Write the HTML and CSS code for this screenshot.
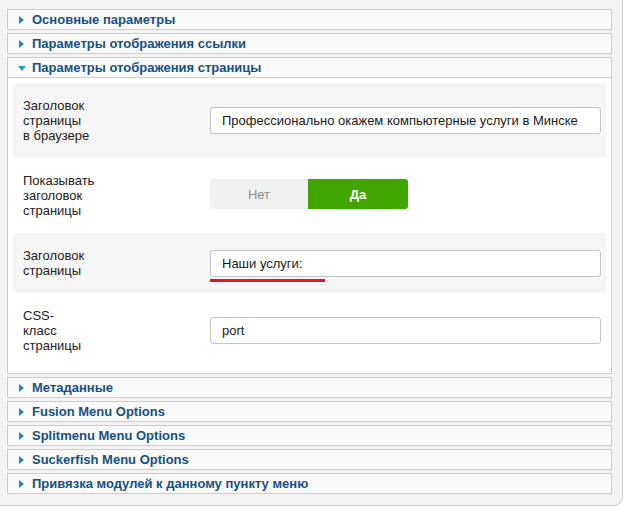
FILE: index.html
```html
<!DOCTYPE html>
<html lang="ru">
<head>
<meta charset="utf-8">
<title>Параметры пункта меню</title>
<link rel="stylesheet" href="styles.css">
</head>
<body>
<div class="pane">
  <div class="panel"><h3 class="toggler"><span class="arrow"></span>Основные параметры</h3></div>
  <div class="panel"><h3 class="toggler"><span class="arrow"></span>Параметры отображения ссылки</h3></div>
  <div class="panel open">
    <h3 class="toggler"><span class="arrow down"></span>Параметры отображения страницы</h3>
    <div class="content">
      <div class="row shaded">
        <div class="key">Заголовок<br>страницы<br>в браузере</div>
        <div class="val"><input class="field" type="text" value="Профессионально окажем компьютерные услуги в Минске"></div>
      </div>
      <div class="row">
        <div class="key">Показывать<br>заголовок<br>страницы</div>
        <div class="val">
          <div class="switch"><span class="opt no">Нет</span><span class="opt yes">Да</span></div>
        </div>
      </div>
      <div class="row shaded">
        <div class="key">Заголовок<br>страницы</div>
        <div class="val mark"><input class="field" type="text" value="Наши услуги:"><span class="underline"></span></div>
      </div>
      <div class="row">
        <div class="key">CSS-<br>класс<br>страницы</div>
        <div class="val"><input class="field" type="text" value="port"></div>
      </div>
    </div>
  </div>
  <div class="panel"><h3 class="toggler"><span class="arrow"></span>Метаданные</h3></div>
  <div class="panel"><h3 class="toggler"><span class="arrow"></span>Fusion Menu Options</h3></div>
  <div class="panel"><h3 class="toggler"><span class="arrow"></span>Splitmenu Menu Options</h3></div>
  <div class="panel"><h3 class="toggler"><span class="arrow"></span>Suckerfish Menu Options</h3></div>
  <div class="panel last"><h3 class="toggler"><span class="arrow"></span>Привязка модулей к данному пункту меню</h3></div>
</div>
</body>
</html>
```
FILE: styles.css
```css
html, body {
  margin: 0;
  padding: 0;
  background: #ffffff;
  font-family: "Liberation Sans", Arial, sans-serif;
  font-size: 13px;
  color: #222;
}

.pane {
  width: 605px;
  padding: 9px 10px 11px 7px;
  background: #f3f3f3;
  border-right: 1px solid #cfcfcf;
  border-bottom: 1px solid #cfcfcf;
  border-bottom-right-radius: 9px;
}

.panel {
  border: 1px solid #cccccc;
  background: #fafafa;
  margin-bottom: 3px;
}

.panel.last {
  margin-bottom: 0;
}

.toggler {
  margin: 0;
  height: 19px;
  line-height: 19px;
  font-size: 13px;
  font-weight: bold;
  color: #17507f;
  display: flex;
  align-items: center;
  padding-left: 11px;
}

.arrow {
  width: 0;
  height: 0;
  border-left: 5px solid #2a85bd;
  border-top: 4px solid transparent;
  border-bottom: 4px solid transparent;
  margin-right: 8px;
  margin-left: 0;
}

.arrow.down {
  border-left: 4px solid transparent;
  border-right: 4px solid transparent;
  border-top: 5px solid #3196cf;
  border-bottom: 0;
  margin-left: -1px;
  margin-right: 6px;
  margin-top: 2px;
}

.content {
  border-top: 1px solid #cccccc;
  background: #ffffff;
  padding: 5px;
}

.row {
  display: flex;
  align-items: center;
  padding: 15px 5px 15px 10px;
  line-height: 15px;
  border-radius: 4px;
}

.row.shaded {
  background: #f5f5f5;
}

.key {
  flex: 0 0 187px;
  color: #222;
}

.val {
  flex: 1 1 auto;
}

.val.mark {
  position: relative;
}

.field {
  display: block;
  box-sizing: border-box;
  width: 100%;
  height: 27px;
  margin: 0;
  padding: 0 11px;
  border: 1px solid #c4c4c4;
  border-radius: 3px;
  background: #ffffff;
  font-family: "Liberation Sans", Arial, sans-serif;
  font-size: 13px;
  color: #1a1a1a;
}

.underline {
  position: absolute;
  left: 0;
  top: 29px;
  width: 115px;
  height: 3px;
  background: #e8141f;
}

.switch {
  display: flex;
  width: 198px;
  height: 30px;
  border-radius: 3px;
  overflow: hidden;
  margin-top: -3px;
}

.opt {
  display: flex;
  align-items: center;
  justify-content: center;
  font-size: 13px;
}

.opt.no {
  width: 98px;
  background: #eff0f0;
  color: #8f8f8f;
}

.opt.yes {
  width: 100px;
  background: #3fa600;
  color: #ffffff;
  font-weight: bold;
}
```
